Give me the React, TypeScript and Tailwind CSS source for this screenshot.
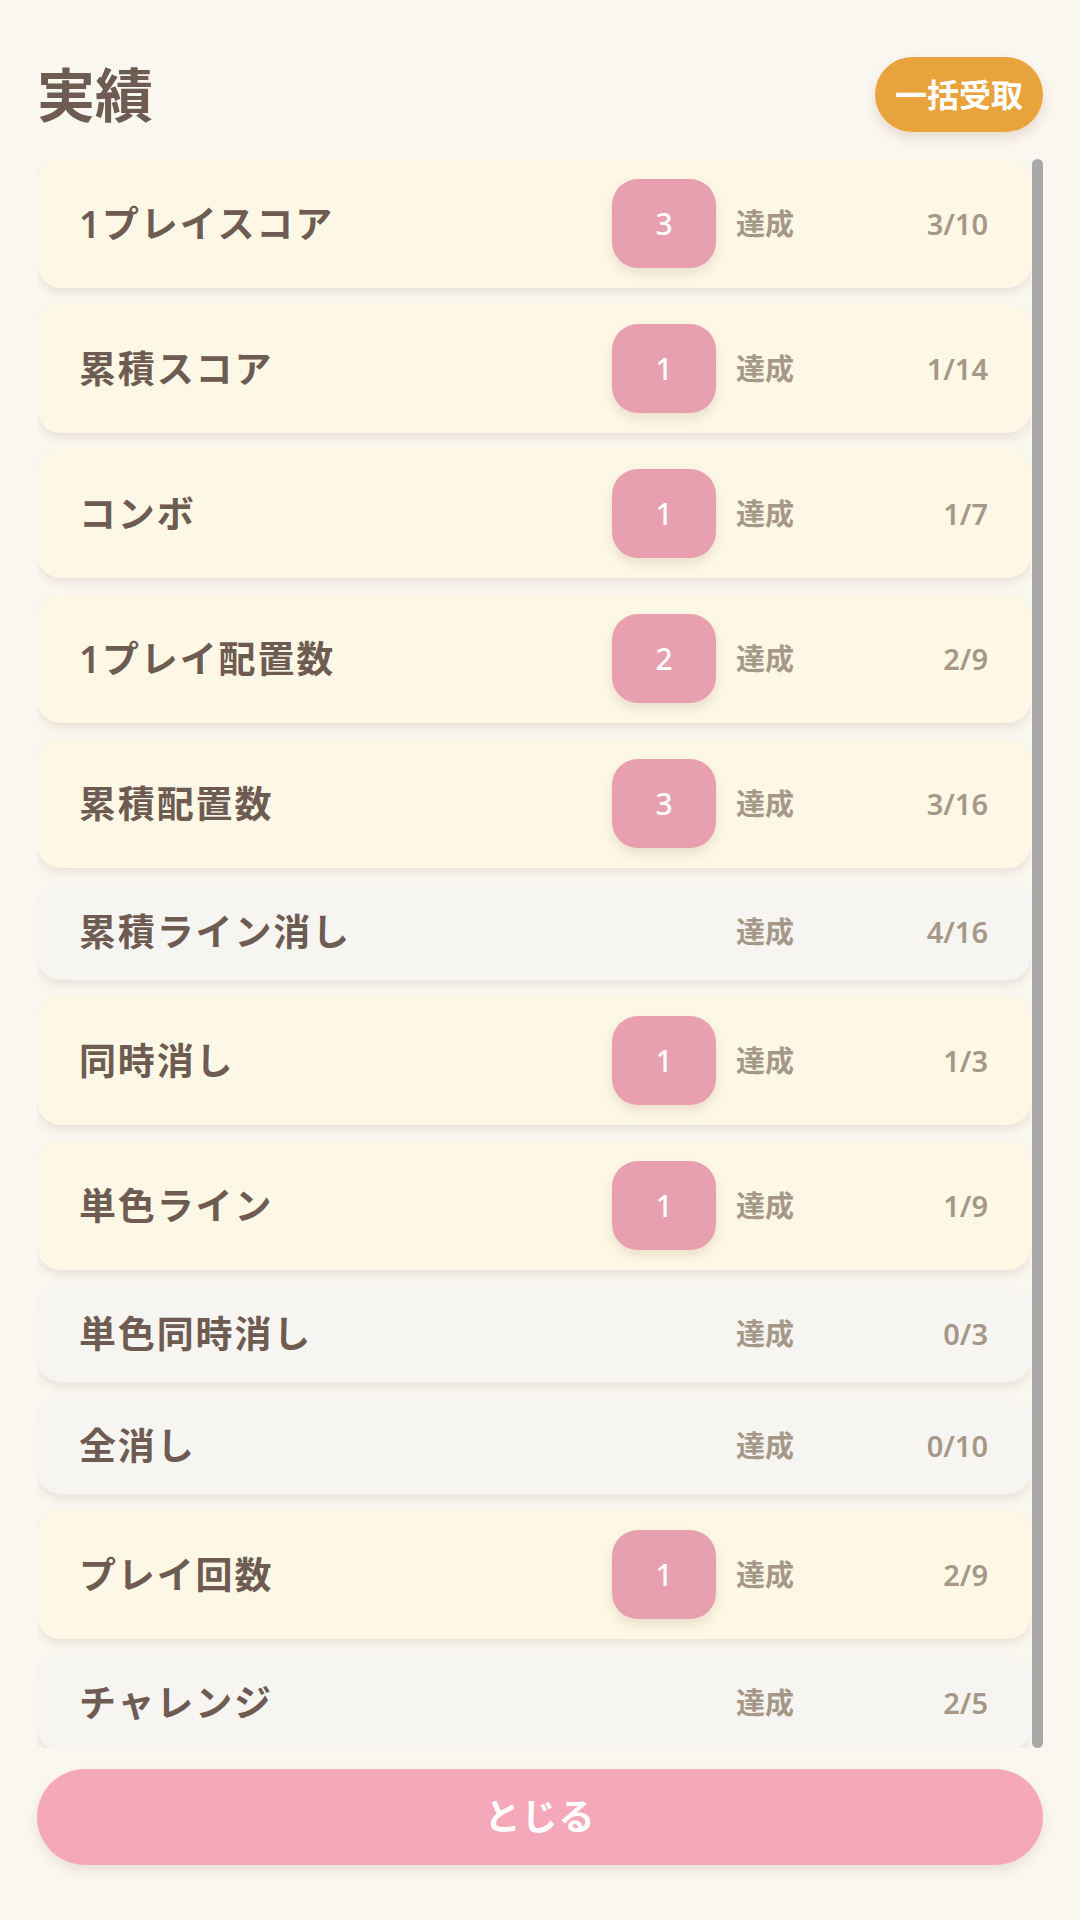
import React from "react";

type Item = { name: string; badge?: number; done: number; total: number };

const items: Item[] = [
  { name: "1プレイスコア", badge: 3, done: 3, total: 10 },
  { name: "累積スコア", badge: 1, done: 1, total: 14 },
  { name: "コンボ", badge: 1, done: 1, total: 7 },
  { name: "1プレイ配置数", badge: 2, done: 2, total: 9 },
  { name: "累積配置数", badge: 3, done: 3, total: 16 },
  { name: "累積ライン消し", done: 4, total: 16 },
  { name: "同時消し", badge: 1, done: 1, total: 3 },
  { name: "単色ライン", badge: 1, done: 1, total: 9 },
  { name: "単色同時消し", done: 0, total: 3 },
  { name: "全消し", done: 0, total: 10 },
  { name: "プレイ回数", badge: 1, done: 2, total: 9 },
  { name: "チャレンジ", done: 2, total: 5 },
];

const font = { fontFamily: '"Noto Sans", "Noto Sans CJK JP", sans-serif' };

function Row({ item }: { item: Item }) {
  const claimable = item.badge !== undefined;
  return (
    <div
      className={`shrink-0 flex items-center pl-[42px] pr-[43px] py-5 rounded-[24px] shadow-[0_5px_8px_rgba(120,100,80,0.13)] ${
        claimable ? "bg-[#fdf8e5]" : "bg-[#f7f5f2]"
      }`}
    >
      <p className="flex-1 min-w-0 truncate text-[37px] tracking-[0.05em] leading-[56px] font-semibold text-[#6e5c52]">
        {item.name}
      </p>
      {claimable && (
        <div className="w-[104px] h-[89px] rounded-[26px] bg-[#e8a0b0] shadow-[0_6px_12px_rgba(150,120,90,0.18)] flex items-center justify-center text-[30px] font-medium text-white">
          {item.badge}
        </div>
      )}
      <span className="ml-5 text-[29px] font-semibold text-[#a69888]">達成</span>
      <span className="w-[194px] text-right text-[29px] font-semibold text-[#a69888]">
        {item.done}/{item.total}
      </span>
    </div>
  );
}

export default function App() {
  return (
    <div className="h-[1920px] bg-[#faf7f0] flex flex-col px-[37px] pt-[57px] pb-[55px]" style={font}>
      <div className="h-[75px] flex items-center justify-between">
        <h1 className="text-[58px] font-semibold text-[#6e5c52] leading-none">実績</h1>
        <button className="h-[75px] px-5 rounded-full bg-[#e9a33c] text-white text-[32px] font-bold shadow-[0_6px_12px_rgba(150,110,60,0.2)]">
          一括受取
        </button>
      </div>

      <div className="mt-[27px] flex-1 min-h-0 flex">
        <div className="flex-1 min-w-0 overflow-hidden flex flex-col gap-4 pb-3">
          {items.map((it) => (
            <Row key={it.name} item={it} />
          ))}
        </div>
        <div className="w-[11px] ml-[1px] rounded-full bg-[#a9a9a9]" />
      </div>

      <button className="mt-[21px] h-[96px] rounded-full bg-[#f4a8b9] text-white text-[36px] font-bold tracking-[0.03em] shadow-[0_6px_12px_rgba(150,110,90,0.15)]">
        とじる
      </button>
    </div>
  );
}
